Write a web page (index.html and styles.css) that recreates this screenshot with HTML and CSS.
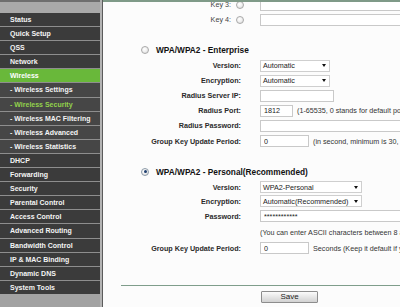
FILE: index.html
```html
<!DOCTYPE html>
<html>
<head>
<meta charset="utf-8">
<link rel="stylesheet" href="styles.css">
</head>
<body>
<div class="page">
  <nav class="sidebar">
    <div class="side-top"></div>
    <ul class="menu">
      <li class="item">Status</li>
      <li class="item">Quick Setup</li>
      <li class="item">QSS</li>
      <li class="item">Network</li>
      <li class="item active">Wireless</li>
      <li class="item sub">- Wireless Settings</li>
      <li class="item sub current">- Wireless Security</li>
      <li class="item sub">- Wireless MAC Filtering</li>
      <li class="item sub">- Wireless Advanced</li>
      <li class="item sub">- Wireless Statistics</li>
      <li class="item">DHCP</li>
      <li class="item">Forwarding</li>
      <li class="item">Security</li>
      <li class="item">Parental Control</li>
      <li class="item">Access Control</li>
      <li class="item">Advanced Routing</li>
      <li class="item">Bandwidth Control</li>
      <li class="item">IP &amp; MAC Binding</li>
      <li class="item">Dynamic DNS</li>
      <li class="item">System Tools</li>
    </ul>
  </nav>
  <div class="divider"></div>
  <main class="content">
    <div class="form">
      <div class="row h15">
        <div class="label key">Key 3: <span class="radio"></span></div>
        <div class="ctl"><input class="inp wide" type="text"></div>
      </div>
      <div class="row h15">
        <div class="label key">Key 4: <span class="radio"></span></div>
        <div class="ctl"><input class="inp wide" type="text"></div>
      </div>
      <div class="spacer h15"></div>
      <div class="title h16"><span class="radio"></span><span class="title-text">WPA/WPA2 - Enterprise</span></div>
      <div class="row h15">
        <div class="label">Version:</div>
        <div class="ctl"><span class="select s70"><span>Automatic</span><i class="arrow"></i></span></div>
      </div>
      <div class="row h15">
        <div class="label">Encryption:</div>
        <div class="ctl"><span class="select s70"><span>Automatic</span><i class="arrow"></i></span></div>
      </div>
      <div class="row h15">
        <div class="label">Radius Server IP:</div>
        <div class="ctl"><input class="inp w74" type="text"></div>
      </div>
      <div class="row h15">
        <div class="label">Radius Port:</div>
        <div class="ctl"><input class="inp w33" type="text" value="1812"><span class="note">(1-65535, 0 stands for default port 1812)</span></div>
      </div>
      <div class="row h15">
        <div class="label">Radius Password:</div>
        <div class="ctl"><input class="inp wide" type="text"></div>
      </div>
      <div class="row h16">
        <div class="label">Group Key Update Period:</div>
        <div class="ctl"><input class="inp w49" type="text" value="0"><span class="note">(in second, minimum is 30, 0 means no update)</span></div>
      </div>
      <div class="spacer h14"></div>
      <div class="title h17"><span class="radio on"></span><span class="title-text">WPA/WPA2 - Personal(Recommended)</span></div>
      <div class="row h14">
        <div class="label">Version:</div>
        <div class="ctl"><span class="select s102"><span>WPA2-Personal</span><i class="arrow"></i></span></div>
      </div>
      <div class="row h14">
        <div class="label">Encryption:</div>
        <div class="ctl"><span class="select s102"><span>Automatic(Recommended)</span><i class="arrow"></i></span></div>
      </div>
      <div class="row h16">
        <div class="label">Password:</div>
        <div class="ctl"><input class="inp wide" type="text" value="************"></div>
      </div>
      <div class="row h16">
        <div class="label"></div>
        <div class="ctl"><span class="note flush">(You can enter ASCII characters between 8 and 63 or Hexadecimal characters between 8 and 64.)</span></div>
      </div>
      <div class="row h16">
        <div class="label">Group Key Update Period:</div>
        <div class="ctl"><input class="inp w49" type="text" value="0"><span class="note">Seconds (Keep it default if you are not sure, minimum is 30, 0 means no update)</span></div>
      </div>
      <div class="spacer h29"></div>
      <div class="rule"></div>
      <div class="actions"><button class="save" type="button">Save</button></div>
    </div>
  </main>
</div>
</body>
</html>
```

FILE: styles.css
```css
html, body {
  margin: 0;
  padding: 0;
  width: 400px;
  height: 307px;
  overflow: hidden;
  font-family: "Liberation Sans", Arial, sans-serif;
}

.page {
  display: flex;
  width: 400px;
  height: 307px;
  overflow: hidden;
}

.sidebar {
  width: 100px;
  flex: none;
  background: #a2a2a2;
  border-top: 2px solid #6e6e6e;
  box-sizing: border-box;
}

.side-top {
  height: 11px;
  background: #a9a9a9;
}

.menu {
  list-style: none;
  margin: 0;
  padding: 0;
  display: flex;
  flex-direction: column;
  gap: 1px;
  background: #8e8e8e;
}

.item {
  height: 13.1px;
  line-height: 13px;
  padding-left: 10px;
  background: #3b3b3b;
  color: #f4f4f4;
  font-size: 7px;
  font-weight: bold;
  white-space: nowrap;
  overflow: hidden;
}

.item.sub {
  background: #464646;
}

.item.active {
  background: #69b83a;
  color: #ffffff;
}

.item.current {
  color: #93d24c;
}

.divider {
  width: 3px;
  flex: none;
  background: #b4b4b4;
  border-right: 1px solid #5c5c5c;
  box-sizing: border-box;
}

.content {
  flex: 1;
  min-width: 0;
  background: #fcfcfc;
  border-top: 2px solid #7f9a88;
  box-sizing: border-box;
  overflow: hidden;
}

.form {
  margin-top: -5px;
  display: flex;
  flex-direction: column;
}

.row {
  display: grid;
  grid-template-columns: 138px 1fr;
  column-gap: 19px;
  align-items: center;
}

.h14 { height: 14px; }
.h15 { height: 15px; }
.h16 { height: 16px; }
.h17 { height: 17px; }
.h29 { height: 29px; }

.label {
  text-align: right;
  font-size: 7.2px;
  font-weight: bold;
  color: #2a2a2a;
  white-space: nowrap;
}

.label.key {
  display: flex;
  justify-content: flex-end;
  align-items: center;
  gap: 5px;
  margin-right: -4px;
  font-weight: normal;
  color: #444;
  padding-right: 1px;
}

.ctl {
  display: flex;
  align-items: center;
  white-space: nowrap;
  min-width: 0;
  overflow: hidden;
}

.inp {
  box-sizing: border-box;
  height: 12px;
  border: 1px solid #c9c9c9;
  background: #ffffff;
  font-family: "Liberation Sans", Arial, sans-serif;
  font-size: 7.2px;
  color: #222;
  padding: 0 3px;
  margin: 0;
  flex: none;
}

.inp.wide { width: 160px; }
.w74 { width: 74px; }
.w33 { width: 33px; }
.w49 { width: 49px; }

.note {
  margin-left: 4px;
  font-size: 7.2px;
  color: #333;
  white-space: nowrap;
}

.note.flush {
  margin-left: 0;
}

.select {
  box-sizing: border-box;
  height: 12px;
  border: 1px solid #cfcfcf;
  background: #ffffff;
  display: flex;
  align-items: center;
  justify-content: space-between;
  padding: 0 3px 0 2px;
  font-size: 7.2px;
  color: #222;
  flex: none;
}

.s70 { width: 70px; }
.s102 { width: 102px; }

.arrow {
  width: 0;
  height: 0;
  border-left: 2px solid transparent;
  border-right: 2px solid transparent;
  border-top: 3px solid #111;
}

.title {
  display: flex;
  align-items: center;
  padding-left: 38px;
  gap: 7px;
}

.title-text {
  font-size: 8.3px;
  font-weight: bold;
  color: #111;
  white-space: nowrap;
}

.radio {
  width: 8px;
  height: 8px;
  box-sizing: border-box;
  border-radius: 50%;
  border: 1px solid #a9a9a9;
  background: radial-gradient(circle at 40% 35%, #ffffff 0%, #f1f1f1 45%, #d6d6d6 100%);
  display: inline-flex;
  align-items: center;
  justify-content: center;
  flex: none;
}

.radio.on {
  border-color: #8c9aa8;
}

.radio.on::after {
  content: "";
  width: 3px;
  height: 3px;
  border-radius: 50%;
  background: #1f3f70;
}

.rule {
  margin-left: 18px;
  height: 0;
  border-top: 1px solid #7f9d8b;
}

.actions {
  display: flex;
  padding-left: 158px;
  padding-top: 5px;
}

.save {
  display: block;
  width: 57px;
  height: 12px;
  box-sizing: border-box;
  padding: 0;
  margin: 0;
  border: 1px solid #8d8d8d;
  border-radius: 1px;
  background: linear-gradient(#fbfbfb, #e4e4e4 55%, #d2d2d2);
  font-family: "Liberation Sans", Arial, sans-serif;
  font-size: 8px;
  color: #222;
  line-height: 10px;
}
```
